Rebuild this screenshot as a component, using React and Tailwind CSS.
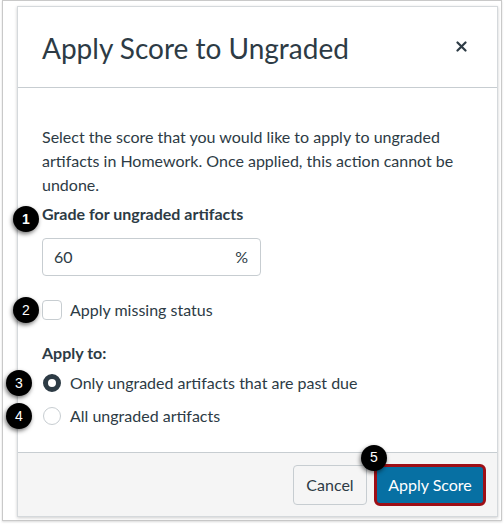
import React from 'react';

function Badge({ n, className }) {
  return (
    <span
      className={`absolute w-[26px] h-[26px] rounded-full bg-black text-white font-['Liberation_Sans',sans-serif] text-[14px] flex items-center justify-center shadow-[-1px_2px_4px_rgba(0,0,0,0.55)] ${className}`}
    >
      {n}
    </span>
  );
}

export default function App() {
  return (
    <div className="w-[504px] h-[526px] bg-white font-['Lato',sans-serif] text-[#2d3b45]">
      <div className="ml-[2px] w-[500px] h-[521px] border border-[#c9c9c9] shadow-[0_1px_2px_rgba(0,0,0,0.15)] pl-[14px] pt-[5px]">
        <div className="w-[481px] h-[511px] border border-[#d5d9dc] flex flex-col shadow-[0_1px_3px_rgba(0,0,0,0.2)] bg-white">
          {/* Header */}
          <div className="h-[81px] shrink-0 border-b border-[#c7cdd1] flex items-center justify-between pl-[24px] pr-[30px]">
            <h2 className="text-[28px] leading-none pt-[2px]">Apply Score to Ungraded</h2>
            <svg width="11" height="11" viewBox="0 0 11 11" className="mb-[2px]">
              <path d="M1.5 1.5 L9.5 9.5 M9.5 1.5 L1.5 9.5" stroke="#2d3b45" strokeWidth="2.2" strokeLinecap="round" />
            </svg>
          </div>

          {/* Body */}
          <div className="flex-1 pl-[24px] pr-[20px] pt-[37px] text-[16px] leading-[24px]">
            <p>
              Select the score that you would like to apply to ungraded artifacts in Homework. Once applied, this action cannot be undone.
            </p>
            <div className="relative mt-[5px] font-bold">
              <Badge n="1" className="left-[-29px] top-[4px]" />
              Grade for ungraded artifacts
            </div>
            <div className="mt-[12px] w-[219px] h-[38px] border border-[#c7cdd1] rounded-[4px] flex items-center justify-between pl-[11px] pr-[12px]">
              <span>60</span>
              <span>%</span>
            </div>
            <div className="relative mt-[22px] flex items-center gap-[8px]">
              <Badge n="2" className="left-[-29px] top-[-1px]" />
              <span className="w-[20px] h-[20px] border border-[#c7cdd1] rounded-[4px] bg-white" />
              <span>Apply missing status</span>
            </div>
            <div className="mt-[19px] font-bold">Apply to:</div>
            <div className="relative mt-[6px] flex items-center gap-[9px]">
              <Badge n="3" className="left-[-36px] top-[-1px]" />
              <span className="ml-[1px] w-[18px] h-[18px] rounded-full border-[5px] border-[#2d3b45] bg-white" />
              <span>Only ungraded artifacts that are past due</span>
            </div>
            <div className="relative mt-[9px] flex items-center gap-[9px]">
              <Badge n="4" className="left-[-36px] top-[-1px]" />
              <span className="ml-[1px] w-[18px] h-[18px] rounded-full border border-[#c7cdd1] bg-white" />
              <span>All ungraded artifacts</span>
            </div>
          </div>

          {/* Footer */}
          <div className="h-[64px] shrink-0 border-t border-[#c7cdd1] bg-[#f5f5f5] flex items-center justify-end gap-[7px] pr-[11px]">
            <button className="h-[40px] w-[74px] border border-[#c7cdd1] rounded-[4px] bg-[#f5f5f5] text-[16px] text-[#2d3b45]">
              Cancel
            </button>
            <div className="relative">
              <Badge n="5" className="left-[-13px] top-[-19px] z-10" />
              <button className="h-[42px] w-[112px] border-[3px] border-[#9e0f16] rounded-[6px] bg-[#0770a3] text-[16px] text-white">
                Apply Score
              </button>
            </div>
          </div>
        </div>
      </div>
    </div>
  );
}
